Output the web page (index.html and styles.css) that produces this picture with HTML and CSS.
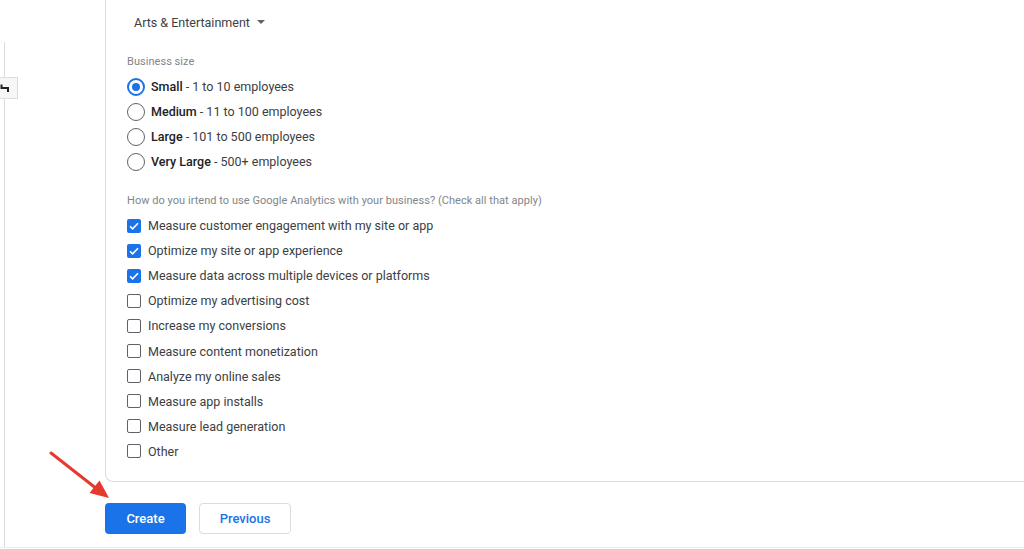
FILE: index.html
```html
<!DOCTYPE html>
<html lang="en">
<head>
    <meta charset="UTF-8">
    <meta name="viewport" content="width=device-width, initial-scale=1.0">
    <title>Business information</title>
    <link rel="stylesheet" href="styles.css">
</head>
<body>
    <div class="page">
        <div class="rail">
            <div class="rail-line"></div>
            <div class="rail-tab">
                <svg width="18" height="22" viewBox="0 0 18 22">
                    <path d="M1.5 6.5 V10 H8 V14" fill="none" stroke="#202124" stroke-width="2"/>
                </svg>
            </div>
        </div>

        <div class="main">
            <div class="card">
                <div class="dropdown">Arts &amp; Entertainment <span class="caret"></span></div>

                <div class="field-label size-label">Business size</div>
                <div class="radio-group">
                    <label class="option"><span class="radio checked"></span><span><b>Small</b> - 1 to 10 employees</span></label>
                    <label class="option"><span class="radio"></span><span><b>Medium</b> - 11 to 100 employees</span></label>
                    <label class="option"><span class="radio"></span><span><b>Large</b> - 101 to 500 employees</span></label>
                    <label class="option"><span class="radio"></span><span><b>Very Large</b> - 500+ employees</span></label>
                </div>

                <div class="field-label question-label">How do you irtend to use Google Analytics with your business? (Check all that apply)</div>
                <div class="check-group">
                    <label class="option"><span class="checkbox checked"><svg width="14" height="14" viewBox="0 0 14 14"><path d="M3 7.2 L5.6 9.8 L11 4.2" fill="none" stroke="#fff" stroke-width="1.6"/></svg></span>Measure customer engagement with my site or app</label>
                    <label class="option"><span class="checkbox checked"><svg width="14" height="14" viewBox="0 0 14 14"><path d="M3 7.2 L5.6 9.8 L11 4.2" fill="none" stroke="#fff" stroke-width="1.6"/></svg></span>Optimize my site or app experience</label>
                    <label class="option"><span class="checkbox checked"><svg width="14" height="14" viewBox="0 0 14 14"><path d="M3 7.2 L5.6 9.8 L11 4.2" fill="none" stroke="#fff" stroke-width="1.6"/></svg></span>Measure data across multiple devices or platforms</label>
                    <label class="option"><span class="checkbox"></span>Optimize my advertising cost</label>
                    <label class="option"><span class="checkbox"></span>Increase my conversions</label>
                    <label class="option"><span class="checkbox"></span>Measure content monetization</label>
                    <label class="option"><span class="checkbox"></span>Analyze my online sales</label>
                    <label class="option"><span class="checkbox"></span>Measure app installs</label>
                    <label class="option"><span class="checkbox"></span>Measure lead generation</label>
                    <label class="option"><span class="checkbox"></span>Other</label>
                </div>
            </div>

            <div class="actions">
                <button class="btn btn-primary">Create</button>
                <button class="btn btn-outline">Previous</button>
            </div>
        </div>

        <!-- annotation arrow pointing at the Create button -->
        <svg class="arrow" width="120" height="60" viewBox="40 445 80 60">
            <line x1="51" y1="453" x2="97" y2="489" stroke="#e53a2f" stroke-width="3" stroke-linecap="round"/>
            <polygon points="109,498 89.5,493 99.5,480.5" fill="#e53a2f"/>
        </svg>
    </div>
</body>
</html>
```

FILE: styles.css
```css
body {
    margin: 0;
    height: 549px;
    overflow: hidden;
    background-color: #fff;
    font-family: Roboto, 'Liberation Sans', sans-serif;
    color: #3c4043;
}
.page {
    position: relative;
    display: flex;
    height: 547px;
    border-bottom: 1px solid #ececec;
}
.rail {
    position: relative;
    width: 105px;
    flex-shrink: 0;
}
.rail-line {
    margin: 42px 0 0 4px;
    height: calc(100% - 42px);
    border-left: 1px solid #dadce0;
}
.rail-tab {
    position: absolute;
    top: 77px;
    left: 0;
    width: 18px;
    height: 22px;
    background-color: #f6f6f6;
    border: 1px solid #dcdcdc;
    border-left: none;
    box-sizing: border-box;
}
.rail-tab svg {
    display: block;
}
.main {
    flex: 1;
    display: flex;
    flex-direction: column;
}
.card {
    border-left: 1px solid #dadce0;
    border-bottom: 1px solid #dadce0;
    border-bottom-left-radius: 8px;
    padding: 12px 0 17px 21px;
}
.dropdown {
    display: flex;
    align-items: center;
    gap: 7px;
    height: 20px;
    padding-left: 7px;
    font-size: 12.5px;
    color: #3c4043;
}
.caret {
    width: 0;
    height: 0;
    border-left: 4px solid transparent;
    border-right: 4px solid transparent;
    border-top: 4px solid #5f6368;
}
.field-label {
    font-size: 11px;
    line-height: 16px;
    letter-spacing: 0.04px;
    color: #80868b;
}
.size-label {
    margin-top: 22px;
}
.question-label {
    margin-top: 19px;
}
.radio-group,
.check-group {
    display: flex;
    flex-direction: column;
    margin-top: 4px;
}
.option {
    display: flex;
    align-items: center;
    height: 25px;
    font-size: 12.5px;
    color: #3c4043;
}
.check-group .option {
    height: 25.1px;
}
.option b {
    font-weight: 500;
    color: #202124;
}
.radio {
    width: 18px;
    height: 18px;
    box-sizing: border-box;
    border: 1.5px solid #5f6368;
    border-radius: 50%;
    margin-right: 6px;
    display: flex;
    align-items: center;
    justify-content: center;
}
.radio.checked {
    border: 2px solid #1a73e8;
}
.radio.checked::after {
    content: "";
    width: 8px;
    height: 8px;
    border-radius: 50%;
    background-color: #1a73e8;
}
.checkbox {
    width: 14px;
    height: 14px;
    box-sizing: border-box;
    border: 1.5px solid #5f6368;
    border-radius: 2px;
    margin-right: 7px;
}
.checkbox.checked {
    border: none;
    background-color: #1a73e8;
}
.checkbox svg {
    display: block;
}
.actions {
    display: flex;
    gap: 13px;
    padding-top: 21px;
}
.btn {
    height: 31px;
    border-radius: 4px;
    font-family: Roboto, 'Liberation Sans', sans-serif;
    font-size: 13px;
    font-weight: 500;
    padding: 0;
    cursor: pointer;
}
.btn-primary {
    width: 81px;
    background-color: #1a73e8;
    border: none;
    color: #fff;
}
.btn-outline {
    width: 92px;
    background-color: #fff;
    border: 1px solid #dadce0;
    color: #1a73e8;
}
.arrow {
    position: absolute;
    left: 40px;
    top: 445px;
    width: 80px;
    height: 60px;
}
```
